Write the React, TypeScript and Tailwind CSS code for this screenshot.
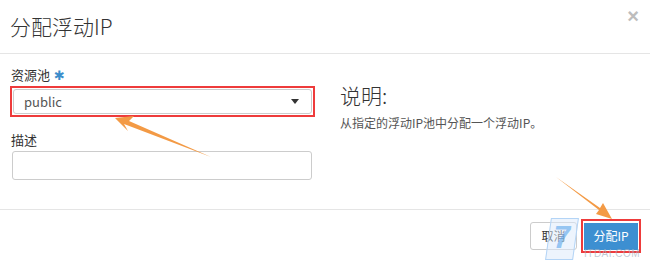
const font = { fontFamily: "'Noto Sans CJK SC', 'Liberation Sans', sans-serif" };

export default function App() {
  return (
    <div
      className="relative w-[650px] h-[260px] bg-white text-[#333] overflow-hidden"
      style={font}
    >
      {/* Header */}
      <div className="h-[54px] flex items-start justify-between border-b border-[#e5e5e5] px-[10px]">
        <h1 className="mt-[12px] text-[21px] leading-[28px] font-light text-[#333]">分配浮动IP</h1>
        <span
          className="mt-[6px] mr-[1px] text-[20px] leading-[20px] font-bold text-[#bdbdbd]"
          style={{ fontFamily: "'Liberation Sans', sans-serif" }}
        >
          ×
        </span>
      </div>

      {/* Body */}
      <div className="h-[155px] flex">
        <div className="w-[340px] pl-[10px] pr-[25px] pt-[11px]">
          <div className="text-[13px] leading-[20px] pl-[1px] flex items-center gap-[4px]">
            资源池
            <span className="text-[#3c8dcb] text-[13px] leading-[13px]" style={{ fontFamily: "'DejaVu Sans', sans-serif" }}>✱</span>
          </div>
          <div className="mt-[1px] border-2 border-[#ee3b3b] p-[1px] w-[305px] h-[31px] flex">
            <div className="flex-1 border border-[#ccc] rounded-[3px] flex items-center justify-between pl-[10px] pr-[12px] text-[13px] text-[#555]">
              <span>public</span>
              <span className="w-0 h-0 border-l-[4px] border-r-[4px] border-t-[5px] border-l-transparent border-r-transparent border-t-[#333]" />
            </div>
          </div>
          <div className="mt-[13px] text-[13px] leading-[20px] pl-[1px]">描述</div>
          <div className="mt-[1px] ml-[2px] w-[300px] h-[29px] border border-[#ccc] rounded-[3px]" />
        </div>
        <div className="pt-[27px]">
          <div className="text-[21px] leading-[28px] font-light text-[#333]">说明:</div>
          <div className="mt-[6px] text-[12px] leading-[16px] text-[#555]">从指定的浮动IP池中分配一个浮动IP。</div>
        </div>
      </div>

      {/* Footer */}
      <div className="border-t border-[#e5e5e5] flex justify-end items-start pr-[9px] pt-[9px] gap-[4px]">
        <button className="mt-[3px] w-[47px] h-[28px] border border-[#ccc] rounded-[3px] bg-white text-[12px] text-[#333]">
          取消
        </button>
        <div className="border-2 border-[#ee3b3b] p-[1px]">
          <button className="w-[54px] h-[27px] bg-[#3d8fd1] text-white text-[12px]">分配IP</button>
        </div>
      </div>

      {/* Watermark */}
      <div className="absolute left-[548px] top-[218px] w-[28px] h-[42px] bg-[#dbeafc]/50 border border-[#b3d4f6] skew-x-[-8deg] flex items-start justify-center">
        <span className="text-[32px] leading-[36px] font-bold text-[#5aa5ec]/60" style={{ fontFamily: "'Liberation Sans', sans-serif" }}>7</span>
      </div>
      <div
        className="absolute left-[584px] top-[249px] text-[10px] leading-[10px] text-[#a7b1c0]/70 tracking-[0.5px]"
        style={{ fontFamily: "'Liberation Sans', sans-serif" }}
      >
        ITDAI.COM
      </div>

      {/* Arrows */}
      <svg className="absolute inset-0 pointer-events-none" width="650" height="260">
        <polygon points="211,157 124,124 128,131 115,118 134,116 129,121" fill="#f39a45" />
        <polygon points="556,177 600,208 603,203 612,219 596,214 599,210" fill="#f39a45" />
      </svg>
    </div>
  );
}
